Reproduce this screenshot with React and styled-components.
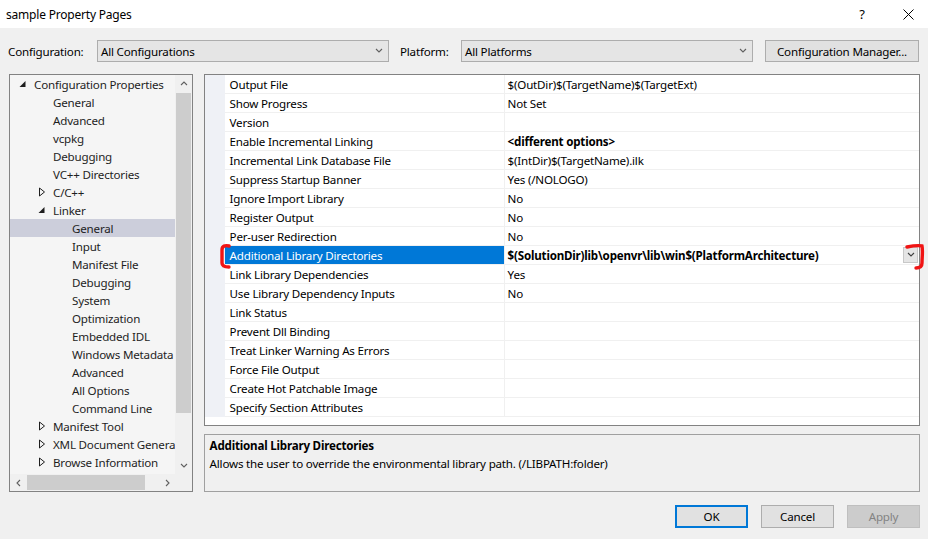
import React from "react";
import styled, { createGlobalStyle } from "styled-components";

const GlobalStyle = createGlobalStyle`
  html, body {
    margin: 0;
    padding: 0;
    background: #f0f0f0;
  }
  body {
    font-family: "Noto Sans", "Liberation Sans", sans-serif;
    font-size: 11.6px;
    letter-spacing: -0.2px;
    color: #000;
  }
`;

const treeItems = [
  { label: "Configuration Properties", level: 0, exp: "open" },
  { label: "General", level: 1 },
  { label: "Advanced", level: 1 },
  { label: "vcpkg", level: 1 },
  { label: "Debugging", level: 1 },
  { label: "VC++ Directories", level: 1 },
  { label: "C/C++", level: 1, exp: "closed" },
  { label: "Linker", level: 1, exp: "open" },
  { label: "General", level: 2, selected: true },
  { label: "Input", level: 2 },
  { label: "Manifest File", level: 2 },
  { label: "Debugging", level: 2 },
  { label: "System", level: 2 },
  { label: "Optimization", level: 2 },
  { label: "Embedded IDL", level: 2 },
  { label: "Windows Metadata", level: 2 },
  { label: "Advanced", level: 2 },
  { label: "All Options", level: 2 },
  { label: "Command Line", level: 2 },
  { label: "Manifest Tool", level: 1, exp: "closed" },
  { label: "XML Document Generator", level: 1, exp: "closed" },
  { label: "Browse Information", level: 1, exp: "closed" },
];

const props = [
  ["Output File", "$(OutDir)$(TargetName)$(TargetExt)"],
  ["Show Progress", "Not Set"],
  ["Version", ""],
  ["Enable Incremental Linking", "<different options>", "bold"],
  ["Incremental Link Database File", "$(IntDir)$(TargetName).ilk"],
  ["Suppress Startup Banner", "Yes (/NOLOGO)"],
  ["Ignore Import Library", "No"],
  ["Register Output", "No"],
  ["Per-user Redirection", "No"],
  [
    "Additional Library Directories",
    "$(SolutionDir)lib\\openvr\\lib\\win$(PlatformArchitecture)",
    "selected",
  ],
  ["Link Library Dependencies", "Yes"],
  ["Use Library Dependency Inputs", "No"],
  ["Link Status", ""],
  ["Prevent Dll Binding", ""],
  ["Treat Linker Warning As Errors", ""],
  ["Force File Output", ""],
  ["Create Hot Patchable Image", ""],
  ["Specify Section Attributes", ""],
];

const Chevron = ({ dir = "down", size = 8, color = "#606060" }) => {
  const pts = {
    down: "1,2 4,5 7,2",
    up: "1,5 4,2 7,5",
    left: "5,1 2,4 5,7",
    right: "3,1 6,4 3,7",
  }[dir];
  return (
    <svg width={size} height={size} viewBox="0 0 8 8">
      <polyline points={pts} fill="none" stroke={color} strokeWidth="1.1" />
    </svg>
  );
};

const Expander = ({ open }) =>
  open ? (
    <svg width="8" height="8" viewBox="0 0 8 8">
      <polygon points="6.5,1 6.5,7 0.5,7" fill="#1e1e1e" />
    </svg>
  ) : (
    <svg width="8" height="10" viewBox="0 0 8 10">
      <polygon points="1.5,1 6.5,5 1.5,9" fill="none" stroke="#1e1e1e" strokeWidth="1" />
    </svg>
  );

const App = () => {
  return (
    <>
      <GlobalStyle />
      <Window>
        <TitleBar>
          <Title>sample Property Pages</Title>
          <Caption>
            <CaptionButton>?</CaptionButton>
            <CaptionButton>
              <svg width="11" height="11" viewBox="0 0 11 11">
                <path d="M0.5 0.5 L10.5 10.5 M10.5 0.5 L0.5 10.5" stroke="#000" strokeWidth="1" />
              </svg>
            </CaptionButton>
          </Caption>
        </TitleBar>

        <Body>
          <Toolbar>
            <Label width="89px">Configuration:</Label>
            <Combo>
              <span>All Configurations</span>
              <Chevron />
            </Combo>
            <Label width="61px" $gap="11px">Platform:</Label>
            <Combo>
              <span>All Platforms</span>
              <Chevron />
            </Combo>
            <ToolButton>Configuration Manager...</ToolButton>
          </Toolbar>

          <Main>
            <TreePanel>
              <TreeList>
                {treeItems.map((item, i) => (
                  <TreeRow key={i} $selected={item.selected}>
                    <ExpanderSlot $level={item.level}>
                      {item.exp && <Expander open={item.exp === "open"} />}
                    </ExpanderSlot>
                    <TreeText>{item.label}</TreeText>
                  </TreeRow>
                ))}
              </TreeList>
              <VScroll>
                <ScrollArrow>
                  <Chevron dir="up" />
                </ScrollArrow>
                <VTrack>
                  <VThumb />
                </VTrack>
                <ScrollArrow>
                  <Chevron dir="down" />
                </ScrollArrow>
              </VScroll>
              <HScroll>
                <ScrollArrow>
                  <Chevron dir="left" />
                </ScrollArrow>
                <HTrack>
                  <HThumb />
                </HTrack>
                <ScrollArrow>
                  <Chevron dir="right" />
                </ScrollArrow>
              </HScroll>
              <Corner />
            </TreePanel>

            <RightColumn>
              <Grid>
                {props.map(([name, value, flag], i) => (
                  <GridRow key={i}>
                    <Gutter />
                    <NameCell $selected={flag === "selected"}>{name}</NameCell>
                    <ValueCell $bold={flag === "bold" || flag === "selected"}>
                      <span>{value}</span>
                      {flag === "selected" && (
                        <DropButton>
                          <Chevron size={8} color="#404040" />
                        </DropButton>
                      )}
                    </ValueCell>
                  </GridRow>
                ))}
                <Mark $left="13px">
                  <svg width="14" height="27" viewBox="0 0 14 27">
                    <path
                      d="M11 3 C7 2 4 3 4 7 L4 20 C4 23 7 24 11 24"
                      fill="none"
                      stroke="#f01414"
                      strokeWidth="3.4"
                      strokeLinecap="round"
                    />
                  </svg>
                </Mark>
                <Mark $left="699px">
                  <svg width="24" height="28" viewBox="0 0 24 28">
                    <path
                      d="M3 4 C8 3 13 2 18 3 C19 8 18 14 18 20 C18 23 16 25 12 25"
                      fill="none"
                      stroke="#f01414"
                      strokeWidth="3.4"
                      strokeLinecap="round"
                    />
                  </svg>
                </Mark>
              </Grid>
              <Description>
                <DescTitle>Additional Library Directories</DescTitle>
                <DescText>
                  Allows the user to override the environmental library path. (/LIBPATH:folder)
                </DescText>
              </Description>
            </RightColumn>
          </Main>

          <Footer>
            <DialogButton $variant="default">OK</DialogButton>
            <DialogButton>Cancel</DialogButton>
            <DialogButton $variant="disabled">Apply</DialogButton>
          </Footer>
        </Body>
      </Window>
    </>
  );
};

export default App;

const Window = styled.div`
  width: 928px;
  height: 539px;
  background: #f0f0f0;
  display: flex;
  flex-direction: column;
  overflow: hidden;
`;

const TitleBar = styled.div`
  height: 28px;
  background: #fff;
  display: flex;
  align-items: center;
  justify-content: space-between;
  padding-left: 6px;
  flex-shrink: 0;
`;

const Title = styled.div`
  font-size: 12px;
  color: #000;
`;

const Caption = styled.div`
  display: flex;
  height: 100%;
  margin-right: -3px;
`;

const CaptionButton = styled.div`
  width: 46px;
  height: 100%;
  display: flex;
  align-items: center;
  justify-content: center;
  font-size: 13px;
`;

const Body = styled.div`
  flex: 1;
  display: flex;
  flex-direction: column;
  padding: 12px 8px 0 8px;
`;

const Toolbar = styled.div`
  display: flex;
  align-items: center;
  height: 22px;
`;

const Label = styled.div`
  width: ${(p) => p.width};
  margin-left: ${(p) => p.$gap || "0"};
  flex-shrink: 0;
`;

const Combo = styled.div`
  width: 292px;
  height: 22px;
  box-sizing: border-box;
  background: #e5e5e5;
  border: 1px solid #adadad;
  display: flex;
  align-items: center;
  justify-content: space-between;
  padding: 0 5px 0 3px;
`;

const ToolButton = styled.div`
  margin-left: 12px;
  width: 154px;
  height: 22px;
  box-sizing: border-box;
  background: #e1e1e1;
  border: 1px solid #adadad;
  display: flex;
  align-items: center;
  justify-content: center;
`;

const Main = styled.div`
  display: flex;
  gap: 11px;
  margin-top: 12px;
  margin-left: 1px;
  height: 418px;
`;

const TreePanel = styled.div`
  width: 184px;
  height: 418px;
  box-sizing: border-box;
  border: 1px solid #828282;
  background: #f5f5f5;
  display: grid;
  grid-template-columns: 165px 17px;
  grid-template-rows: 399px 17px;
  overflow: hidden;
`;

const TreeList = styled.div`
  overflow: hidden;
`;

const TreeRow = styled.div`
  height: 18px;
  display: flex;
  align-items: center;
  white-space: nowrap;
  color: #1e1e1e;
  background: ${(p) => (p.$selected ? "#cccedb" : "transparent")};
`;

const ExpanderSlot = styled.div`
  width: 15px;
  margin-left: ${(p) => 9 + p.$level * 19}px;
  display: flex;
  align-items: center;
  flex-shrink: 0;
`;

const TreeText = styled.span``;

const VScroll = styled.div`
  background: #f0f0f0;
  display: flex;
  flex-direction: column;
`;

const HScroll = styled.div`
  background: #f0f0f0;
  display: flex;
`;

const Corner = styled.div`
  background: #f0f0f0;
`;

const ScrollArrow = styled.div`
  width: 17px;
  height: 17px;
  display: flex;
  align-items: center;
  justify-content: center;
  flex-shrink: 0;
`;

const VTrack = styled.div`
  flex: 1;
  padding: 1px 1px 0 1px;
`;

const VThumb = styled.div`
  height: 320px;
  background: #cdcdcd;
`;

const HTrack = styled.div`
  flex: 1;
  padding: 1px 0;
`;

const HThumb = styled.div`
  width: 118px;
  height: 15px;
  background: #cdcdcd;
`;

const RightColumn = styled.div`
  width: 718px;
  display: flex;
  flex-direction: column;
  gap: 8px;
`;

const Grid = styled.div`
  position: relative;
  height: 352px;
  box-sizing: border-box;
  border: 1px solid #828282;
  background: #fff;
`;

const GridRow = styled.div`
  display: grid;
  grid-template-columns: 20px 280px 1fr;
  height: 19px;
`;

const Gutter = styled.div`
  background: #eff1f6;
`;

const NameCell = styled.div`
  box-sizing: border-box;
  padding-left: 5px;
  display: flex;
  align-items: center;
  border-bottom: 1px solid #f0f0f0;
  border-right: 1px solid #f0f0f0;
  background: ${(p) => (p.$selected ? "#0078d7" : "#fff")};
  color: ${(p) => (p.$selected ? "#fff" : "#000")};
  white-space: nowrap;
`;

const ValueCell = styled.div`
  box-sizing: border-box;
  padding-left: 3px;
  display: flex;
  align-items: center;
  justify-content: space-between;
  border-bottom: 1px solid #f0f0f0;
  font-weight: ${(p) => (p.$bold ? 700 : 400)};
  white-space: nowrap;
`;

const DropButton = styled.div`
  width: 15px;
  height: 16px;
  box-sizing: border-box;
  background: #e5e5e5;
  border: 1px solid #c8c8c8;
  display: flex;
  align-items: center;
  justify-content: center;
  margin-right: 1px;
`;

const Mark = styled.div`
  position: absolute;
  top: 168px;
  left: ${(p) => p.$left};
  pointer-events: none;
  line-height: 0;
`;

const Description = styled.div`
  height: 58px;
  box-sizing: border-box;
  border: 1px solid #a0a0a0;
  background: #f0f0f0;
  padding: 2px 5px;
`;

const DescTitle = styled.div`
  font-weight: 700;
  line-height: 18px;
`;

const DescText = styled.div`
  line-height: 18px;
`;

const Footer = styled.div`
  display: flex;
  justify-content: flex-end;
  gap: 13px;
  margin-top: 13px;
  padding-right: 0px;
`;

const DialogButton = styled.div`
  width: 73px;
  height: 23px;
  box-sizing: border-box;
  display: flex;
  align-items: center;
  justify-content: center;
  background: ${(p) => (p.$variant === "disabled" ? "#cccccc" : "#e1e1e1")};
  color: ${(p) => (p.$variant === "disabled" ? "#838383" : "#000")};
  border: ${(p) =>
    p.$variant === "default"
      ? "2px solid #0078d7"
      : p.$variant === "disabled"
      ? "1px solid #bfbfbf"
      : "1px solid #adadad"};
`;
